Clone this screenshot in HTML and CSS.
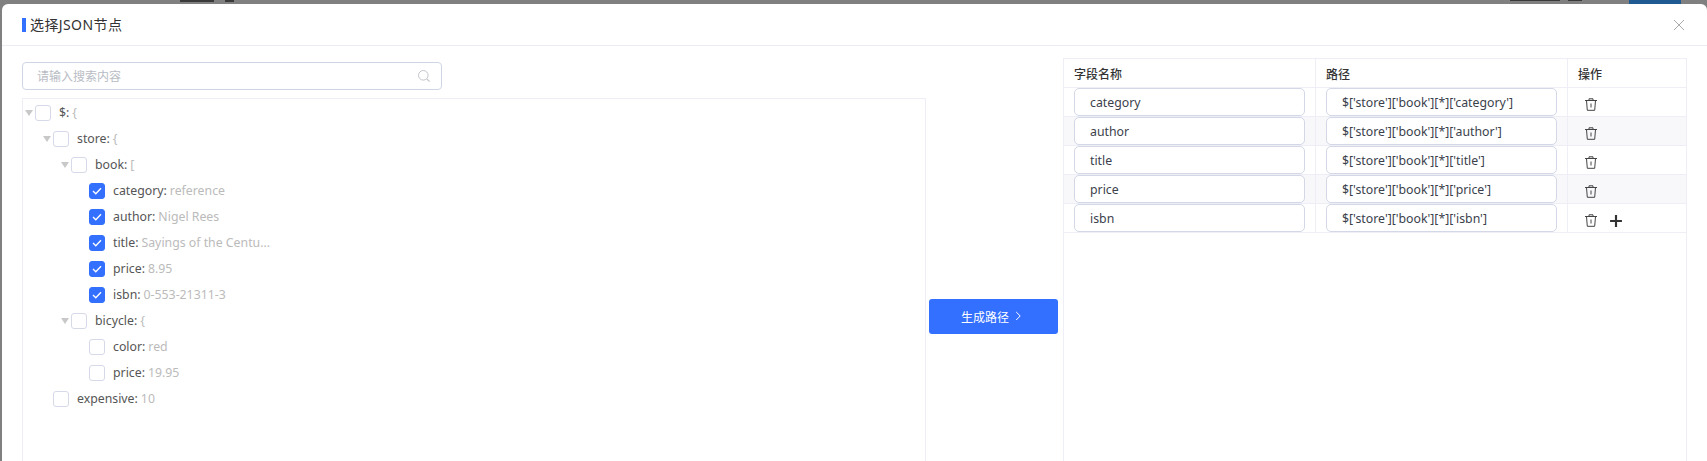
FILE: index.html
```html
<!DOCTYPE html>
<html lang="zh">
<head>
<meta charset="utf-8">
<title>选择JSON节点</title>
<link rel="stylesheet" href="styles.css">
</head>
<body>
<div class="behind">
  <span class="mark m1"></span>
  <span class="mark m2"></span>
  <span class="mark m3"></span>
  <span class="mark m4"></span>
  <span class="behind-btn"></span>
</div>
<div class="modal">
  <header class="modal-head">
    <span class="title-bar"></span>
    <h1 class="title">选择JSON节点</h1>
    <svg class="close" width="12" height="12" viewBox="0 0 12 12"><path d="M1 1l10 10M11 1L1 11" stroke="#aaaaaa" stroke-width="1" fill="none"/></svg>
  </header>
  <div class="modal-body">
    <section class="left">
      <div class="search">
        <span class="placeholder">请输入搜索内容</span>
        <svg width="14" height="14" viewBox="0 0 14 14"><circle cx="6.3" cy="6.3" r="4.8" stroke="#c4c6cc" stroke-width="1" fill="none"/><path d="M10 10l2.6 2.6" stroke="#c4c6cc" stroke-width="1.2" fill="none"/></svg>
      </div>
      <div class="tree">
        <div class="node l0"><i class="tri"></i><span class="cb"></span><span class="key">$:</span><span class="val">{</span></div>
        <div class="node l1"><i class="tri"></i><span class="cb"></span><span class="key">store:</span><span class="val">{</span></div>
        <div class="node l2"><i class="tri"></i><span class="cb"></span><span class="key">book:</span><span class="val">[</span></div>
        <div class="node l3"><i class="tri off"></i><span class="cb on"><svg width="10" height="8" viewBox="0 0 10 8"><path d="M1 4l2.8 2.8L9 1.2" stroke="#fff" stroke-width="1.3" fill="none"/></svg></span><span class="key">category:</span><span class="val">reference</span></div>
        <div class="node l3"><i class="tri off"></i><span class="cb on"><svg width="10" height="8" viewBox="0 0 10 8"><path d="M1 4l2.8 2.8L9 1.2" stroke="#fff" stroke-width="1.3" fill="none"/></svg></span><span class="key">author:</span><span class="val">Nigel Rees</span></div>
        <div class="node l3"><i class="tri off"></i><span class="cb on"><svg width="10" height="8" viewBox="0 0 10 8"><path d="M1 4l2.8 2.8L9 1.2" stroke="#fff" stroke-width="1.3" fill="none"/></svg></span><span class="key">title:</span><span class="val">Sayings of the Centu...</span></div>
        <div class="node l3"><i class="tri off"></i><span class="cb on"><svg width="10" height="8" viewBox="0 0 10 8"><path d="M1 4l2.8 2.8L9 1.2" stroke="#fff" stroke-width="1.3" fill="none"/></svg></span><span class="key">price:</span><span class="val">8.95</span></div>
        <div class="node l3"><i class="tri off"></i><span class="cb on"><svg width="10" height="8" viewBox="0 0 10 8"><path d="M1 4l2.8 2.8L9 1.2" stroke="#fff" stroke-width="1.3" fill="none"/></svg></span><span class="key">isbn:</span><span class="val">0-553-21311-3</span></div>
        <div class="node l2"><i class="tri"></i><span class="cb"></span><span class="key">bicycle:</span><span class="val">{</span></div>
        <div class="node l3"><i class="tri off"></i><span class="cb"></span><span class="key">color:</span><span class="val">red</span></div>
        <div class="node l3"><i class="tri off"></i><span class="cb"></span><span class="key">price:</span><span class="val">19.95</span></div>
        <div class="node l1"><i class="tri off"></i><span class="cb"></span><span class="key">expensive:</span><span class="val">10</span></div>
      </div>
    </section>
    <div class="middle">
      <button class="gen" type="button">生成路径<svg width="7" height="10" viewBox="0 0 7 10"><path d="M1.2 1l4 4-4 4" stroke="#fff" stroke-width="1" fill="none"/></svg></button>
    </div>
    <section class="table">
      <div class="row head"><div class="cell">字段名称</div><div class="cell">路径</div><div class="cell">操作</div></div>
      <div class="row"><div class="cell"><div class="field">category</div></div><div class="cell"><div class="field">$['store']['book'][*]['category']</div></div><div class="cell ops"><svg class="trash" width="12" height="13" viewBox="0 0 12 13"><path d="M0 2.5h12M4 2.5V.8h4v1.7M1.5 2.5l.8 9.8h7.4l.8-9.8M6 5.5v4" stroke="#444" stroke-width="1" fill="none"/></svg></div></div>
      <div class="row alt"><div class="cell"><div class="field">author</div></div><div class="cell"><div class="field">$['store']['book'][*]['author']</div></div><div class="cell ops"><svg class="trash" width="12" height="13" viewBox="0 0 12 13"><path d="M0 2.5h12M4 2.5V.8h4v1.7M1.5 2.5l.8 9.8h7.4l.8-9.8M6 5.5v4" stroke="#444" stroke-width="1" fill="none"/></svg></div></div>
      <div class="row"><div class="cell"><div class="field">title</div></div><div class="cell"><div class="field">$['store']['book'][*]['title']</div></div><div class="cell ops"><svg class="trash" width="12" height="13" viewBox="0 0 12 13"><path d="M0 2.5h12M4 2.5V.8h4v1.7M1.5 2.5l.8 9.8h7.4l.8-9.8M6 5.5v4" stroke="#444" stroke-width="1" fill="none"/></svg></div></div>
      <div class="row alt"><div class="cell"><div class="field">price</div></div><div class="cell"><div class="field">$['store']['book'][*]['price']</div></div><div class="cell ops"><svg class="trash" width="12" height="13" viewBox="0 0 12 13"><path d="M0 2.5h12M4 2.5V.8h4v1.7M1.5 2.5l.8 9.8h7.4l.8-9.8M6 5.5v4" stroke="#444" stroke-width="1" fill="none"/></svg></div></div>
      <div class="row"><div class="cell"><div class="field">isbn</div></div><div class="cell"><div class="field">$['store']['book'][*]['isbn']</div></div><div class="cell ops"><svg class="trash" width="12" height="13" viewBox="0 0 12 13"><path d="M0 2.5h12M4 2.5V.8h4v1.7M1.5 2.5l.8 9.8h7.4l.8-9.8M6 5.5v4" stroke="#444" stroke-width="1" fill="none"/></svg><svg class="plus" width="13" height="13" viewBox="0 0 13 13"><path d="M6.5 1v11M1 6.5h11" stroke="#333" stroke-width="2" fill="none"/></svg></div></div>
    </section>
  </div>
</div>
</body>
</html>
```
FILE: styles.css
```css
* { box-sizing: border-box; }
html, body { margin: 0; height: 461px; overflow: hidden; }
body {
  background: #808080;
  font-family: "Noto Sans", "Noto Sans CJK SC", sans-serif;
  font-size: 12.3px;
  color: #444;
}
.behind { height: 4px; overflow: hidden; position: relative; }
.mark { position: absolute; top: 0; height: 2px; background: #3a3a3a; }
.m1 { left: 180px; width: 34px; }
.m2 { left: 225px; width: 9px; }
.m3 { left: 1510px; width: 50px; height: 1px; }
.m4 { left: 1568px; width: 14px; height: 1px; }
.behind-btn { position: absolute; left: 1629px; width: 52px; top: 0; height: 4px; background: #1f5a93; }

.modal {
  margin-left: 2px;
  width: 1705px;
  height: 620px;
  background: #fff;
  border-radius: 6px 6px 0 0;
}
.modal-head {
  height: 42px;
  display: flex;
  align-items: center;
  padding-left: 20px;
  padding-right: 22px;
  border-bottom: 1px solid #ebedf2;
}
.title-bar { width: 4px; height: 14px; background: #3370ff; margin-right: 4px; flex: none; }
.title { margin: 0; font-size: 14px; font-weight: 400; color: #333; flex: 1; line-height: 20px; letter-spacing: .4px; }
.close { display: block; }

.modal-body { display: flex; height: 516px; margin-top: 12px; padding-left: 20px; }
.left { width: 904px; padding-top: 4px; flex: none; }
.search {
  width: 420px;
  height: 28px;
  border: 1px solid #d0d5e3;
  border-radius: 4px;
  display: flex;
  align-items: center;
  justify-content: space-between;
  padding: 0 10px 0 14px;
}
.placeholder { font-size: 12px; color: #b8bcc4; }
.search svg { display: block; }

.tree {
  margin-top: 8px;
  height: 480px;
  border: 1px solid #eeeff6;
  padding-top: 1px;
}
.node { display: flex; align-items: center; height: 26px; white-space: nowrap; }
.l0 { padding-left: 2px; }
.l1 { padding-left: 20px; }
.l2 { padding-left: 38px; }
.l3 { padding-left: 56px; }
.tri {
  width: 0; height: 0;
  margin-right: 2px;
  border-left: 4px solid transparent;
  border-right: 4px solid transparent;
  border-top: 6px solid #c8c8c8;
}
.tri.off { visibility: hidden; }
.cb {
  width: 16px; height: 16px;
  border: 1px solid #d6d9e8;
  border-radius: 3px;
  background: #fff;
  display: flex;
  align-items: center;
  justify-content: center;
  margin-right: 8px;
  flex: none;
}
.cb.on { background: #3370ff; border-color: #3370ff; }
.cb svg { display: block; }
.key { color: #555; margin-right: 3px; padding-bottom: 1px; }
.val { color: #bbb; padding-bottom: 1px; }

.middle { width: 137px; flex: none; display: flex; align-items: center; padding-left: 3px; }
.gen {
  width: 129px; height: 35px;
  background: #3370ff;
  border: 0;
  border-radius: 3px;
  color: #fff;
  font: 12px "Noto Sans CJK SC", "Noto Sans", sans-serif;
  display: flex;
  align-items: center;
  justify-content: center;
  gap: 6px;
  padding: 0 4px 0 0;
}
.gen svg { display: block; }

.table {
  width: 624px;
  flex: none;
  border: 1px solid #eeeff6;
  border-bottom: 0;
}
.row {
  display: grid;
  grid-template-columns: 252px 252px 1fr;
  height: 29px;
  border-bottom: 1px solid #eeeff6;
}
.row.alt { background: #f8f8fa; }
.cell { border-right: 1px solid #eeeff6; padding-left: 10px; display: flex; align-items: flex-start; }
.cell:last-child { border-right: 0; }
.row.head .cell {
  align-items: center;
  font-size: 12px;
  font-weight: 500;
  color: #333;
  font-family: "Noto Sans CJK SC", "Noto Sans", sans-serif;
}
.field {
  width: 231px;
  height: 28px;
  background: #fff;
  border: 1px solid #d3d7e6;
  border-radius: 5px;
  padding-left: 15px;
  line-height: 27px;
  color: #3b3f4c;
}
.ops { padding-left: 17px; padding-top: 10px; align-items: flex-start; }
.trash { display: block; flex: none; }
.plus { display: block; margin: 0 0 0 12px; flex: none; width: 14px; height: 14px; }
```
